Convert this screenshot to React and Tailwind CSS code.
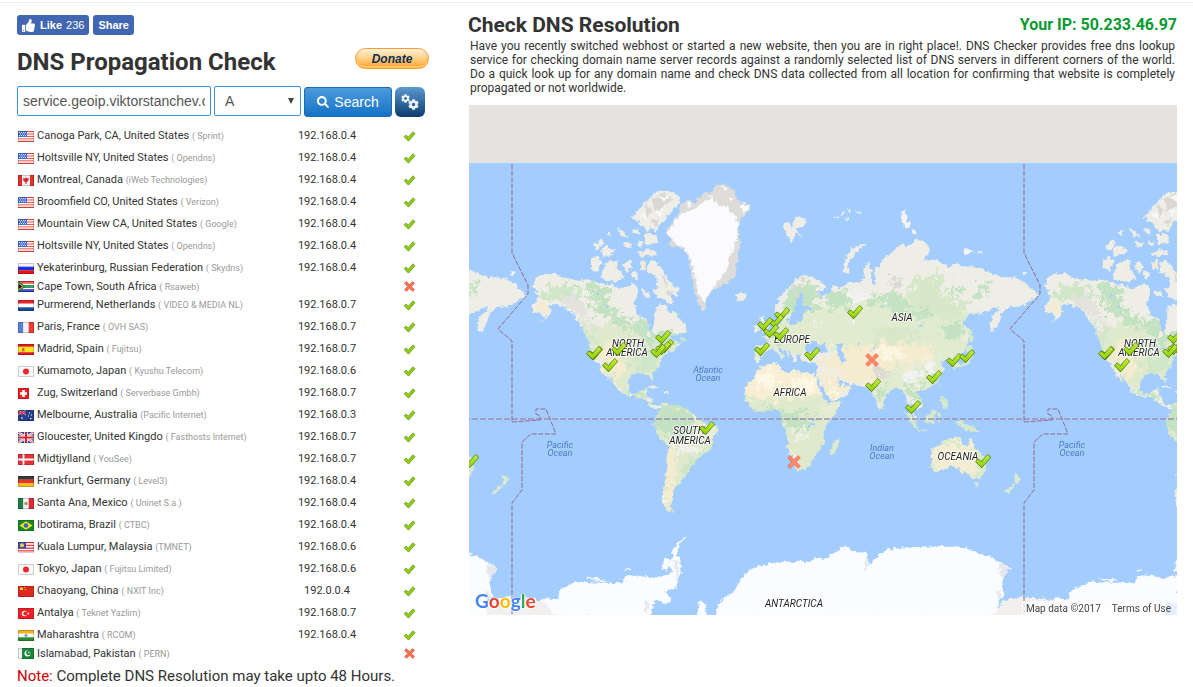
import React from "react";
import { FaSearch, FaCog, FaThumbsUp } from "react-icons/fa";

const servers = [
  ["us", "Canoga Park, CA, United States", "( Sprint)", "192.168.0.4"],
  ["us", "Holtsville NY, United States", "( Opendns)", "192.168.0.4"],
  ["ca", "Montreal, Canada", "(iWeb Technologies)", "192.168.0.4"],
  ["us", "Broomfield CO, United States", "( Verizon)", "192.168.0.4"],
  ["us", "Mountain View CA, United States", "( Google)", "192.168.0.4"],
  ["us", "Holtsville NY, United States", "( Opendns)", "192.168.0.4"],
  ["ru", "Yekaterinburg, Russian Federation", "( Skydns)", "192.168.0.4"],
  ["za", "Cape Town, South Africa", "( Rsaweb)", ""],
  ["nl", "Purmerend, Netherlands", "( VIDEO & MEDIA NL)", "192.168.0.7"],
  ["fr", "Paris, France", "( OVH SAS)", "192.168.0.7"],
  ["es", "Madrid, Spain", "( Fujitsu)", "192.168.0.7"],
  ["jp", "Kumamoto, Japan", "( Kyushu Telecom)", "192.168.0.6"],
  ["ch", "Zug, Switzerland", "( Serverbase Gmbh)", "192.168.0.7"],
  ["au", "Melbourne, Australia", "(Pacific Internet)", "192.168.0.3"],
  ["gb", "Gloucester, United Kingdo", "( Fasthosts Internet)", "192.168.0.7"],
  ["dk", "Midtjylland", "( YouSee)", "192.168.0.7"],
  ["de", "Frankfurt, Germany", "( Level3)", "192.168.0.4"],
  ["mx", "Santa Ana, Mexico", "( Uninet S.a.)", "192.168.0.4"],
  ["br", "Ibotirama, Brazil", "( CTBC)", "192.168.0.4"],
  ["my", "Kuala Lumpur, Malaysia", "(TMNET)", "192.168.0.6"],
  ["jp", "Tokyo, Japan", "( Fujitsu Limited)", "192.168.0.6"],
  ["cn", "Chaoyang, China", "( NXIT Inc)", "192.0.0.4"],
  ["tr", "Antalya", "( Teknet Yazlim)", "192.168.0.7"],
  ["in", "Maharashtra", "( RCOM)", "192.168.0.4"],
  ["pk", "Islamabad, Pakistan", "( PERN)", ""],
];

const bands = (colors) => colors.map((c, i) => <rect key={i} x="0" y={(i * 11) / colors.length} width="16" height={11 / colors.length + 0.1} fill={c} />);
const bars = (colors) => colors.map((c, i) => <rect key={i} x={(i * 16) / colors.length} y="0" width={16 / colors.length + 0.1} height="11" fill={c} />);

const flagArt = {
  us: (
    <>
      {bands(["#f2544b", "#fff", "#f2544b", "#fff", "#f2544b", "#fff", "#f2544b", "#fff", "#e8534b"])}
      <rect width="9" height="6" fill="#3f6fd8" />
      <path d="M1 1.500h7M2 3h6M1 4.500h7" stroke="#fff" strokeWidth=".8" strokeDasharray="1 1" />
    </>
  ),
  ca: (
    <>
      {bars(["#e0302f", "#f6f2f2", "#f6f2f2", "#e0302f"])}
      <path d="M8 2l1 1.500 2-.2-.7 2.200L8.500 7.500V9h-1V7.500L5.300 5.500 5 3.300l2 .2z" fill="#d8242a" />
    </>
  ),
  ru: bands(["#f4f4f4", "#1d2fe0", "#e81313"]),
  za: (
    <>
      {bands(["#e33", "#e33", "#fff", "#168a46", "#168a46", "#fff", "#2033b8", "#2033b8"])}
      <path d="M0 0l8 5.500L0 11z" fill="#168a46" />
      <path d="M0 2l5 3.500L0 9z" fill="#111" stroke="#fb3" strokeWidth=".9" />
    </>
  ),
  nl: bands(["#e8202a", "#fff", "#174a9c"]),
  fr: bars(["#5b7fd4", "#f3f3f3", "#ee3a35"]),
  es: (
    <>
      {bands(["#e6181c", "#ffe419", "#ffe419", "#e6181c"])}
      <path d="M4 4h2.500v3.500H4z" fill="#d96a3c" />
    </>
  ),
  jp: (
    <>
      <rect width="16" height="11" fill="#fafafa" />
      <circle cx="8" cy="5.500" r="3" fill="#f0252d" />
    </>
  ),
  ch: (
    <>
      <rect width="11" height="11" fill="#ee2020" />
      <path d="M5.500 2v7M2 5.500h7" stroke="#fff" strokeWidth="2.600" />
    </>
  ),
  au: (
    <>
      <rect width="16" height="11" fill="#263f8c" />
      <path d="M0 0l8 5M8 0L0 5" stroke="#e9b7c0" strokeWidth=".9" />
      <path d="M4 0v5.500M0 2.700h8" stroke="#e33d4c" strokeWidth="1.200" />
      <path d="M3 8h2M11 3h1M13 5h1M10 6h1M12 8.500h1.500" stroke="#fff" strokeWidth="1.200" />
    </>
  ),
  gb: (
    <>
      <rect width="16" height="11" fill="#3455b5" />
      <path d="M0 0l16 11M16 0L0 11" stroke="#fff" strokeWidth="2.400" />
      <path d="M0 0l16 11M16 0L0 11" stroke="#e5484f" strokeWidth=".8" />
      <path d="M8 0v11M0 5.500h16" stroke="#fff" strokeWidth="3.600" />
      <path d="M8 0v11M0 5.500h16" stroke="#e0202c" strokeWidth="2" />
    </>
  ),
  dk: (
    <>
      <rect width="16" height="11" fill="#e63238" />
      <path d="M5.500 0v11M0 5.500h16" stroke="#fff" strokeWidth="1.800" />
    </>
  ),
  de: bands(["#3a3a3a", "#e33522", "#f5bb20"]),
  mx: (
    <>
      {bars(["#1d7d46", "#f5f5f5", "#dd2b35"])}
      <circle cx="8" cy="5.500" r="1.700" fill="#a98f66" />
    </>
  ),
  br: (
    <>
      <rect width="16" height="11" fill="#148a2c" />
      <path d="M8 1.200l6.500 4.300L8 9.800 1.500 5.500z" fill="#f9e11e" />
      <circle cx="8" cy="5.500" r="2.300" fill="#3468c8" />
    </>
  ),
  my: (
    <>
      {bands(["#e8323a", "#fff", "#e8323a", "#fff", "#e8323a", "#fff", "#e8323a", "#fff"])}
      <rect width="8" height="6.500" fill="#3a4fae" />
      <circle cx="4" cy="3.200" r="2" fill="#f5d23c" />
    </>
  ),
  cn: (
    <>
      <rect width="16" height="11" fill="#dc2a22" />
      <path d="M2 1.500h3v2.500H2zM6 1h1v1H6zM7 3h1v1H7z" fill="#fbd51f" />
    </>
  ),
  tr: (
    <>
      <rect width="16" height="11" fill="#ee2025" />
      <circle cx="6.500" cy="5.500" r="2.700" fill="#fff" />
      <circle cx="7.300" cy="5.500" r="2" fill="#ee2025" />
      <path d="M9 5.500l2-1.200v2.400z" fill="#fff" />
    </>
  ),
  in: (
    <>
      {bands(["#f6b21c", "#fafafa", "#2b8a2e"])}
      <circle cx="8" cy="5.500" r="1.500" fill="#7f93cf" />
    </>
  ),
  pk: (
    <>
      <rect width="16" height="11" fill="#17883a" />
      <rect width="4" height="11" fill="#f2f2f2" />
      <circle cx="9.500" cy="5.500" r="3" fill="#fff" />
      <circle cx="10.500" cy="4.800" r="2.400" fill="#17883a" />
      <circle cx="11" cy="4.500" r=".8" fill="#fff" />
    </>
  ),
};

function Flag({ code }) {
  const width = code === "ch" ? 11 : 16;
  return (
    <svg width="16" height="11" viewBox="0 0 16 11" aria-hidden="true" className="ml-px block">
      {flagArt[code]}
      <rect x=".5" y=".5" width={width - 1} height="10" fill="none" stroke="#000" strokeOpacity=".18" />
    </svg>
  );
}

const checkPath = "M.8 7.400L3 5.200l3 2.600L12 1l2.500 2.500-8.300 9.400z";
const crossPath = "M3 .8l4 4 4-4L13.200 3l-4 4 4 4L11 13.200l-4-4-4 4L.8 11l4-4-4-4z";

function Tick() {
  return (
    <svg width="13" height="11" viewBox="0 0 15 14" role="img" aria-label="Resolved" className="mx-auto block">
      <path d={checkPath} fill="#92cc10" stroke="#6aa52a" strokeWidth="1.100" strokeLinejoin="round" />
    </svg>
  );
}

function Cross() {
  return (
    <svg width="11" height="11" viewBox="0 0 14 14" role="img" aria-label="Not resolved" className="mx-auto block">
      <path d={crossPath} fill="#fb7350" stroke="#e2573a" strokeWidth="1.100" strokeLinejoin="round" />
    </svg>
  );
}

const americas = "translate(465 160) scale(.33333)";
const eurasia = "translate(640 160) scale(.33333)";
const southern = "translate(640 360) scale(.33333)";
const siberia = "translate(820 200) scale(.33333)";
const oceania = "translate(840 370) scale(.33333)";
const polar = "translate(465 500) scale(.46425 .33333)";

const northAmerica =
  "M200 378L215 350 240 340 262 340 285 350 315 356 340 362 365 355 380 360 405 368 425 378 440 372 460 385 485 380 500 368 515 378 522 400 508 428 515 455 530 470 548 480 552 512 562 515 566 490 570 470 572 440 585 432 605 440 612 458 632 452 640 470 655 490 668 505 665 515 640 525 615 528 622 540 645 545 640 558 622 572 600 582 585 600 582 620 562 640 564 662 556 660 550 645 530 640 500 645 490 665 488 690 500 705 520 700 530 690 548 685 545 705 555 712 565 735 585 738 600 735 595 745 575 745 555 742 545 722 510 712 480 705 460 690 455 678 435 650 420 635 408 612 425 640 440 668 432 662 415 640 400 610 388 600 378 580 372 555 365 530 350 500 335 480 318 455 295 440 270 432 250 440 258 455 250 470 218 490 240 472 225 460 205 455 202 435 215 425 222 410 212 400 220 392Z";

const arcticIslands = [
  "M500 170L520 150 545 120 575 95 620 95 645 110 640 135 615 160 600 180 580 195 572 215 560 205 548 215 525 190Z",
  "M540 222L572 222 578 245 560 254 540 252Z",
  "M500 205L518 205 522 225 508 222ZM518 240L532 246 528 262 516 255Z",
  "M518 280L545 268 572 272 574 284 530 290Z",
  "M378 300L395 288 412 305 395 335 378 325Z",
  "M408 350L422 312 440 300 458 305 455 325 478 350 455 365 425 362Z",
  "M475 308L493 300 500 320 488 340 475 330Z",
  "M385 255L410 235 417 252 395 272Z",
  "M408 268L425 255 440 268 460 272 435 285 410 287Z",
  "M425 217L438 212 436 228ZM455 203L468 208 478 216 490 235 470 228ZM475 243L500 250 498 265 480 262Z",
  "M525 305L540 298 544 325 530 332Z",
  "M550 308L566 300 590 325 605 350 625 375 645 385 635 410 618 400 624 435 600 420 575 408 560 390 578 380 580 358 560 340 548 340Z",
  "M528 388L550 395 557 410 535 410Z",
  "M502 330L520 340 512 360 500 350Z",
];

const eurasiaCoast =
  "M405 440L415 420 430 400 445 380 465 358 490 345 515 350 545 365 560 380 550 395 528 392 545 410 560 405 575 395 578 375 590 378 600 385 625 370 660 365 675 355 672 320 685 308 695 330 693 360 702 380 706 340 700 320 720 322 725 300 755 275 790 250 800 262 830 235 860 250 870 275 850 298 890 300 930 322 945 310 985 320 1020 325 1060 345 1100 352 1125 352 1160 372 1185 395 1196 410 1180 415 1165 425 1140 440 1110 440 1085 460 1080 480 1062 515 1050 520 1050 490 1060 465 1080 442 1060 445 1030 460 1000 460 980 470 965 490 990 515 985 540 975 570 955 585 955 605 962 620 950 620 942 608 930 600 910 600 900 612 912 625 905 640 895 660 880 675 855 690 835 690 830 700 845 720 848 735 835 750 825 738 815 730 812 745 825 765 835 782 825 778 808 745 800 720 795 700 785 690 770 682 755 690 735 705 730 735 722 750 712 735 700 705 692 690 680 685 650 675 625 670 610 665 590 648 600 668 615 680 635 675 620 705 590 720 572 725 560 700 545 675 530 650 528 640 535 620 525 605 500 608 485 600 480 583 468 585 472 605 460 600 455 582 440 565 450 590 430 570 412 560 425 580 435 590 425 602 415 580 400 565 385 572 370 585 355 608 343 600 348 575 346 560 380 556 385 540 368 528 395 520 410 500 425 490 422 475 405 460Z";

const eurasiaIslands = [
  "M358 475L370 465 375 485 387 505 385 515 362 520 370 500Z",
  "M342 498L355 493 356 512 342 516Z",
  "M285 405L300 395 322 400 318 415 300 425 290 418Z",
  "M430 190L445 185 455 200 465 175 480 168 497 180 490 200 470 205 485 235 470 217 455 250 440 225Z",
  "M608 335L612 305 630 270 670 250 678 255 645 280 630 300 622 320 630 342Z",
  "M580 170L600 165 595 175ZM605 155L615 160 606 166ZM620 145L635 150 625 158ZM645 155L662 152 660 162ZM615 172L630 175 618 180Z",
];

const siberianIslands = [
  "M400 498L425 492 440 480 452 450 458 470 450 492 425 497 405 505ZM435 440L455 438 462 448 440 455ZM447 385L455 385 458 425 448 430Z",
  "M398 500L405 500 406 512 398 512ZM358 548L363 556 358 562ZM360 580L368 592 380 600 382 625 370 628 362 600Z",
  "M315 655L335 630 350 632 342 672 318 670ZM250 632L268 640 290 670 295 688 278 676ZM290 685L325 692 322 697 290 690ZM352 640L362 640 358 672 352 670Z",
  "M405 665L425 662 435 672 460 680 482 697 460 695 435 690ZM183 615L191 622 186 630Z",
];
const polarSiberianIslands = [
  "M240 40L255 30 260 55 272 75 265 88 248 75ZM275 88L288 92 292 100 278 103ZM430 150L445 145 462 155 435 166ZM470 155L488 160 475 164Z",
  "M608 214L622 214 618 222 608 221Z",
];

const greenland =
  "M75 220L90 195 105 180 120 150 122 130 150 118 165 130 180 110 195 92 215 100 230 75 250 70 285 88 285 110 300 130 325 132 332 145 315 165 300 180 295 215 300 250 295 290 285 350 255 372 220 388 205 412 195 452 180 440 165 400 160 360 150 320 145 290 130 265 100 260 85 255 95 235Z";
const greenlandIce =
  "M78 219L105 188 122 160 160 150 190 125 215 118 245 140 265 145 288 170 295 200 290 240 272 280 264 320 245 350 217 382 195 430 175 405 166 355 150 292 130 261 105 256 98 235Z";

const southAmerica =
  "M62 130L75 128 100 135 125 135 145 150 165 165 175 180 200 190 230 200 235 212 220 235 215 260 205 275 180 285 165 310 150 325 140 345 120 358 125 368 108 378 100 400 98 420 92 440 102 458 85 455 70 435 65 410 75 375 78 330 82 290 85 255 60 235 45 205 40 190 50 165 60 148Z";
const africa =
  "M345 50L360 20 380 14 415 8 422 28 445 40 458 30 485 38 515 40 528 50 535 80 550 110 565 130 602 126 590 155 570 180 555 200 550 220 555 240 545 260 530 275 520 300 500 325 470 333 462 315 455 290 440 260 445 235 435 205 422 180 425 160 410 150 385 150 350 155 330 140 312 115 318 80Z";
const australia =
  "M270 240L300 225 315 210 330 205 350 200 367 205 362 218 380 230 387 222 390 198 400 215 407 238 425 255 440 275 435 300 420 325 400 325 385 318 380 305 365 310 355 292 330 290 300 302 280 303 272 290 277 265Z";

const antarctica = [
  "M540 350L545 310 580 270 610 210 640 195 680 185 740 185 760 172 770 180 800 152 820 138 840 155 865 158 870 195 885 175 905 150 950 142 1010 140 1070 140 1100 155 1130 170 1150 185 1175 205 1155 245 1162 290 1150 300 1148 350Z",
  "M165 295L200 298 205 270 240 245 290 248 340 250 345 225 380 228 405 235 430 225 450 215 438 190 450 165 460 170 467 215 455 260 430 275 445 290 440 308 425 312 410 300 400 350 160 350Z",
  "M450 170L445 155 458 128 475 110 478 114 460 135 456 168ZM500 350L500 315 510 304 518 315 518 350Z",
  "M262 233L285 235 310 245 270 241ZM340 210L358 208 355 214ZM425 200L432 172 440 180 436 215 425 212Z",
];

const paint = (transform, paths, fill) => (
  <g transform={transform} fill={fill}>
    {paths.map((d, i) => (
      <path key={i} d={d} />
    ))}
  </g>
);

function Terrain({ frame, clip, children }) {
  return (
    <g transform={frame} clipPath={`url(#${clip})`}>
      <g filter="url(#mottle)">{children}</g>
    </g>
  );
}

function Land() {
  return (
    <g id="land">
      <clipPath id="clip-na"><path d={northAmerica} /></clipPath>
      <clipPath id="clip-ea"><path d={eurasiaCoast} /></clipPath>
      <clipPath id="clip-sa"><path d={southAmerica} /></clipPath>
      <clipPath id="clip-af"><path d={africa} /></clipPath>
      <clipPath id="clip-au"><path d={australia} /></clipPath>

      {paint(americas, [northAmerica, ...arcticIslands], "#eeede6")}
      <Terrain frame={americas} clip="clip-na">
        <path fill="#deeacb" d="M350 500L480 490 600 530 640 560 560 680 470 720 430 650 370 560Z" />
        <path fill="#c3e2c1" d="M362 360L400 372 440 400 430 430 470 465 530 480 560 520 620 515 650 540 590 560 540 540 480 505 420 470 380 440 365 400Z" />
        <path fill="#cfe7c8" d="M230 385L290 375 350 370 350 400 300 430 250 420ZM345 470L375 510 395 560 375 560 350 500ZM500 600L580 570 570 640 510 645Z" />
        <path fill="#f5ecd0" d="M395 560L460 540 480 600 470 660 440 640 400 600ZM205 430L245 435 255 465 210 460Z" />
        <path fill="#e4e2dc" d="M290 405L340 410 360 450 390 500 400 540 375 490 340 460 300 440Z" />
        <path fill="#c5e3c0" d="M480 690L550 705 570 740 540 720 500 712Z" />
        <path fill="#eeede6" d="M375 400L395 415 385 430ZM440 440L460 450 445 465ZM480 480L505 490 490 500ZM400 480L420 490 410 505Z" />
        <path fill="#a3ccff" d="M385 388L405 395 392 402ZM422 430L436 433 428 440ZM530 558L562 560 570 572 545 573Z" />
      </Terrain>
      {paint(americas, ["M645 528L660 530 668 542 648 541Z"], "#d4e8cd")}
      <g transform={americas} fill="#d9d8d4">
        <path d="M560 115L600 100 625 120 590 140 570 160ZM540 130L560 150 545 175ZM560 180L585 175 570 200ZM590 340L610 365 600 380ZM600 390L625 395 612 408Z" />
        <path fill="#f8f8f8" d="M580 110L612 105 600 128ZM525 165L540 155 548 185ZM575 150L600 150 580 170ZM600 350L615 375 622 385 605 370Z" />
        <path fill="#f3ead0" d="M527 308L540 302 541 322 532 328ZM445 310L455 312 450 340ZM520 283L540 275 538 287Z" />
      </g>

      {paint(eurasia, [greenland], "#dddcd8")}
      {paint(eurasia, [greenlandIce, "M300 133L325 135 326 145 310 160Z", "M140 128L152 126 155 140 142 142ZM205 103L220 110 215 120ZM240 80L262 85 255 95ZM262 110L280 112 272 128Z"], "#fbfbff")}
      {paint(eurasia, [eurasiaCoast, ...eurasiaIslands], "#eeede6")}
      {paint(siberia, polarSiberianIslands, "#f4f3f0")}
      <Terrain frame={eurasia} clip="clip-ea">
        <path fill="#e1ebd0" d="M340 460L450 470 560 440 700 430 850 400 960 420 1000 480 980 570 960 620 880 690 800 700 720 750 690 680 560 560 340 600Z" />
        <path fill="#d7e8c9" d="M820 350L900 345 920 420 990 430 960 480 860 470 800 420ZM700 510L830 500 850 540 720 545Z" />
        <path fill="#c3e2c1" d="M440 420L470 370 520 362 550 385 520 420 540 430 520 460 480 450 430 470ZM560 400L620 385 640 430 600 450 560 440ZM680 400L770 400 800 440 880 450 850 480 790 470 740 440 690 430ZM900 500L970 480 960 540 920 540ZM1010 370L1050 365 1040 400 1015 410ZM930 380L960 380 955 410 935 405Z" />
        <path fill="#f5ecd0" d="M590 560L680 560 740 540 880 560 870 610 780 620 730 630 700 680 590 650 530 640 525 660 575 730 640 680 600 640 540 610 560 590Z" />
        <path fill="#fcf5e2" d="M700 570L760 560 790 590 740 600ZM560 650L600 690 580 715Z" />
        <path fill="#c6e3c0" d="M700 690L760 670 735 700 725 745ZM790 680L850 680 845 735 815 725ZM850 640L905 640 880 675ZM348 580L385 570 362 600ZM410 500L440 540 430 570 400 530Z" />
        <path fill="#dbdad5" d="M755 355L790 350 780 400 760 390ZM450 380L480 355 500 352 460 400ZM700 620L760 640 740 650 700 640Z" />
        <path fill="#f2f2f2" d="M640 390L680 400 670 440 640 420ZM780 640L830 620 840 660 800 670ZM720 420L750 425 740 440ZM620 480L650 485 640 500ZM850 610L890 600 880 640 860 640ZM960 360L990 370 980 390ZM500 480L530 490 520 505Z" />
      </Terrain>
      <g transform={eurasia} fill="#a3ccff">
        <path d="M435 482L455 470 465 440 478 400 492 408 485 438 512 438 512 447 490 455 487 482 455 495Z" />
        <path d="M495 578L500 552 520 544 532 555 555 550 565 576 530 578ZM588 552L612 546 604 570 617 600 605 612 596 590Z" />
        <path d="M832 510L850 485 848 500ZM695 565L705 562 700 572ZM650 550L660 548 655 558ZM590 665L610 668 600 680Z" />
      </g>
      {paint(siberia, siberianIslands, "#d6e9cd")}

      {paint(southern, ["M22 82L40 76 60 86 50 88ZM68 92L88 94 90 98 70 99Z"], "#eeede6")}
      {paint(southern, [southAmerica, africa, "M572 265L588 240 594 230 599 245 590 270 582 288 570 280Z"], "#dfeacc")}
      <Terrain frame={southern} clip="clip-sa">
        <path fill="#c3e2c1" d="M40 130L130 135 160 170 140 240 90 230 50 210Z" />
        <path fill="#ecedda" d="M160 180L235 200 215 240 170 230Z" />
        <path fill="#f5ecd0" d="M82 250L105 270 105 350 100 400 90 450 65 430 78 380Z" />
        <path fill="#cde6c5" d="M165 290L205 250 180 310 130 350 140 310Z" />
        <path fill="#f2f2ee" d="M90 255L135 250 180 255 170 275 120 270ZM65 410L80 410 85 435 72 435Z" />
      </Terrain>
      <Terrain frame={southern} clip="clip-af">
        <path fill="#f7eed4" d="M290 -20L560 -20 580 120 520 110 420 115 290 110Z" />
        <path fill="#fdf7e4" d="M340 60L400 30 420 70 370 90ZM450 50L530 55 530 90 470 95Z" />
        <path fill="#e8ecd0" d="M560 120L610 120 590 170 540 160Z" />
        <path fill="#c3e2c1" d="M350 140L400 135 420 155 500 160 520 185 495 205 430 205 420 160Z" />
        <path fill="#eff0e8" d="M450 215L490 200 500 235 470 250Z" />
        <path fill="#f5ecd0" d="M438 250L460 270 475 320 460 320Z" />
        <path fill="#a3ccff" d="M512 180L528 178 520 192ZM505 205L510 215 506 218Z" />
      </Terrain>
      {paint(oceania, [australia], "#f3edd3")}
      <Terrain frame={oceania} clip="clip-au">
        <path fill="#d8e9c8" d="M300 220L370 195 365 225 320 225ZM385 200L410 240 445 280 425 330 390 320 420 300 405 260ZM265 280L290 285 285 310Z" />
      </Terrain>
      {paint(oceania, ["M402 340L416 341 411 354ZM525 308L534 320 544 324 532 345 524 340ZM527 338L518 356 502 372 494 366Z"], "#dcebd0")}

      {paint(polar, ["M1145 350L1160 300 1185 292 1210 305 1270 300 1300 350Z", "M30 350L55 310 90 292 150 296 175 310 180 350Z"], "#f1f0ee")}
      {paint(polar, antarctica, "#fbfcff")}
      <g transform={polar} fill="#e6e7ea">
        <path d="M1150 190L1174 206 1158 240 1152 225ZM448 180L458 185 462 225 452 250 455 215ZM388 300L398 310 394 340 386 330ZM1148 270L1158 290 1148 300ZM858 190L868 165 866 215Z" />
      </g>
    </g>
  );
}

const ticks = [
  [595, 353], [594, 353], [619, 349], [610, 365], [663, 337], [666, 346], [663, 348], [658, 351],
  [782, 314], [776, 321], [765, 324], [771, 331], [781, 334], [762, 349], [812, 354], [855, 312],
  [873, 385], [954, 360], [967, 356], [934, 377], [913, 407], [707, 428], [983, 461],
];
const crosses = [[872, 360], [794, 462]];
const labels = [
  [628, 347, "NORTH"], [627, 356, "AMERICA"], [902, 321, "ASIA"], [792, 343, "EUROPE"], [790, 396, "AFRICA"],
  [689, 434, "SOUTH"], [690, 444, "AMERICA"], [958, 460, "OCEANIA"], [794, 607, "ANTARCTICA"],
];
const oceans = [
  [708, 373, "Atlantic"], [708, 381, "Ocean"], [560, 448, "Pacific"], [560, 456, "Ocean"], [882, 451, "Indian"], [882, 459, "Ocean"],
];
const dateline =
  "M512 164V253L528 285V294L498 329 512 341V422L540 420V416L536 414V409H546L556 434H531L522 442V490L512 503V615";
const copies = [-512, 0, 512];
const onMap = (x) => x > 469 && x < 1177;

function WorldMap() {
  return (
    <svg viewBox="469 105 708 510" preserveAspectRatio="xMidYMid slice" role="img" aria-label="World map of DNS servers" className="block h-[510px] w-full font-['Roboto',sans-serif]">
      <defs>
        <filter id="coast" filterUnits="userSpaceOnUse" x="460" y="105" width="730" height="520">
          <feTurbulence type="fractalNoise" baseFrequency=".22" numOctaves="3" seed="4" />
          <feDisplacementMap in="SourceGraphic" scale="6" xChannelSelector="R" yChannelSelector="G" />
        </filter>
        <filter id="mottle">
          <feTurbulence type="fractalNoise" baseFrequency=".05" numOctaves="4" seed="9" />
          <feDisplacementMap in="SourceGraphic" scale="75" xChannelSelector="R" yChannelSelector="G" />
        </filter>
        <linearGradient id="tick-fill" x1="0" y1="0" x2="0" y2="1">
          <stop offset="0" stopColor="#c4ee3a" />
          <stop offset="1" stopColor="#8fcf00" />
        </linearGradient>
        <path id="tick" d={checkPath} transform="translate(-8 -7.300) scale(1.060)" fill="url(#tick-fill)" stroke="#436f0b" strokeLinejoin="round" />
        <path id="cross" d={crossPath} transform="translate(-7 -7)" fill="#ff8a70" stroke="#d23a22" strokeLinejoin="round" />
      </defs>
      <rect x="-2000" y="105" width="5000" height="58" fill="#e5e3df" />
      <rect x="-2000" y="163" width="5000" height="452" fill="#a3ccff" />
      <g filter="url(#coast)">
        <Land />
        <use href="#land" x="-512" />
        <use href="#land" x="512" />
      </g>
      <path d="M-512 419H2048" stroke="#a08fae" strokeWidth="1.500" strokeDasharray="6 2" />
      {copies.slice(1).map((dx) => (
        <path key={dx} transform={`translate(${dx} 0)`} d={dateline} fill="none" stroke="#94688c" strokeDasharray="5 1.500" />
      ))}
      {copies.map((dx) => (
        <g key={dx} transform={`translate(${dx} 0)`} textAnchor="middle" fontStyle="italic" fontSize="10" strokeLinejoin="round" paintOrder="stroke">
          {labels.filter(([x]) => onMap(x + dx)).map(([x, y, t]) => (
            <text key={t + y} x={x} y={y} fill="#1d1d1d" stroke="#fff" strokeOpacity=".75" strokeWidth="2">{t}</text>
          ))}
          {oceans.filter(([x]) => onMap(x + dx)).map(([x, y, t]) => (
            <text key={t + y} x={x} y={y} fontSize="9" fill="#4c7cc0">{t}</text>
          ))}
          {ticks.map(([x, y]) => (
            <use key={x + "-" + y} href="#tick" x={x} y={y} />
          ))}
          {crosses.map(([x, y]) => (
            <use key={x + "-" + y} href="#cross" x={x} y={y} />
          ))}
        </g>
      ))}
    </svg>
  );
}

function GoogleLogo() {
  return (
    <a href="#google" className="flex font-['Lato',sans-serif] text-[19px] leading-7 font-bold [text-shadow:0_0_1px_#fff,1px_0_1px_#fff,-1px_0_1px_#fff,0_1px_1px_#fff]">
      <span className="text-[#4285f4]">G</span>
      <span className="text-[#ea4335]">o</span>
      <span className="text-[#fbbc05]">o</span>
      <span className="text-[#4285f4]">g</span>
      <span className="text-[#34a853]">l</span>
      <span className="text-[#ea4335]">e</span>
    </a>
  );
}

export default function App() {
  return (
    <div className="bg-white font-['Roboto',sans-serif] text-[#333]">
      <div className="mt-[2px] h-px bg-[#eee]" />
      <main className="flex items-start pr-4">
        <section className="w-[468px] shrink-0 pl-[17px]">
          <div className="flex gap-1 pt-3 font-['Liberation_Sans',sans-serif] text-[11px] leading-5 text-white">
            <button type="button" className="flex h-5 items-center rounded-[3px] bg-[#4267b2] pr-[5px] pl-[5px]">
              <FaThumbsUp className="mr-[5px] size-[13px]" />
              <span className="font-bold">Like</span>
              <span className="ml-1">236</span>
            </button>
            <button type="button" className="h-5 rounded-[3px] bg-[#4267b2] px-[5px] font-bold">Share</button>
          </div>
          <div className="mt-[11px] flex h-8 w-[412px] items-center justify-between">
            <h1 className="text-2xl font-bold">DNS Propagation Check</h1>
            <button type="button" className="mb-[7px] h-[21px] w-[74px] rounded-full border border-[#ff9933] bg-linear-to-b from-[#fff2d8] via-[#ffd48a] via-45% to-[#ffa01e] font-['Liberation_Sans',sans-serif] text-xs leading-[18px] font-bold text-[#0c2f57] italic shadow-[inset_0_-2px_0_#ffc65c]">
              Donate
            </button>
          </div>
          <form className="mt-2 flex items-start gap-[3px] font-['Liberation_Sans',sans-serif]" onSubmit={(e) => e.preventDefault()}>
            <input aria-label="Domain name" defaultValue="service.geoip.viktorstanchev.com" className="h-[30px] w-[194px] rounded-[2px] border border-[#3a95d8] px-[5px] text-sm text-[#555]" />
            <div className="relative">
              <select aria-label="Record type" defaultValue="A" className="h-[30px] w-[87px] appearance-none rounded-[2px] border border-[#3a95d8] bg-white pl-[10px] text-sm text-[#555]">
                <option>A</option>
                <option>AAAA</option>
                <option>CNAME</option>
                <option>MX</option>
                <option>NS</option>
              </select>
              <svg width="6" height="6" viewBox="0 0 6 6" aria-hidden="true" className="pointer-events-none absolute top-3 right-[7px]">
                <path d="M0 0h6L3 6z" fill="#444" />
              </svg>
            </div>
            <button type="submit" className="mt-px flex h-[30px] w-[88px] items-center justify-center gap-[5px] rounded-[3px] border border-[#1a6cb4] bg-linear-to-b from-[#4a9bdc] to-[#1273c6] text-sm text-white">
              <FaSearch className="size-3" />
              Search
            </button>
            <button type="button" aria-label="Settings" className="mt-px flex size-[30px] items-center justify-center rounded-md bg-linear-to-b from-[#5b9bd0] to-[#0b3c6e] text-[#eef3f8]">
              <FaCog className="mb-[7px] size-[9px]" />
              <FaCog className="mt-[5px] -ml-[2px] size-[11px]" />
            </button>
          </form>
          <table className="mt-2 w-[425px] table-fixed text-[11px]">
            <colgroup>
              <col className="w-5" />
              <col />
              <col className="w-[98px]" />
              <col className="w-[66px]" />
            </colgroup>
            <tbody>
              {servers.map(([flag, place, provider, ip], i) => (
                <tr key={i} className={ip ? "h-[22px]" : "h-[15px]"}>
                  <td className="p-0"><Flag code={flag} /></td>
                  <td className="p-0 leading-[14px] whitespace-nowrap">
                    {place} <span className="text-[9px] leading-none text-[#999]">{provider}</span>
                  </td>
                  <td className="p-0 text-center leading-[14px]">{ip}</td>
                  <td className="p-0">{ip ? <Tick /> : <Cross />}</td>
                </tr>
              ))}
            </tbody>
          </table>
          <p className="pt-1 text-[15px] leading-[22px]">
            <span className="text-[#c00]">Note:</span> Complete DNS Resolution may take upto 48 Hours.
          </p>
        </section>

        <section className="min-w-0 grow">
          <div className="flex items-center justify-between pt-2">
            <h2 className="text-[21px] leading-7 font-bold">Check DNS Resolution</h2>
            <p className="text-base leading-[26px] font-bold text-[#0a9a32]">Your IP: 50.233.46.97</p>
          </div>
          <p className="mr-[2px] ml-[2px] text-justify text-xs leading-[14px]">
            Have you recently switched webhost or started a new website, then you are in right place!. DNS Checker provides free dns lookup service for checking domain name server records against a randomly selected list of DNS servers in different corners of the world. Do a quick look up for any domain name and check DNS data collected from all location for confirming that website is completely propagated or not worldwide.
          </p>
          <div className="relative mt-[10px] ml-px overflow-hidden">
            <WorldMap />
            <div className="absolute bottom-0 left-[6px]"><GoogleLogo /></div>
            <div className="absolute right-0 bottom-0 flex h-[14px] items-center bg-white/70 text-[10px] text-[#444]">
              <span className="px-1">Map data ©2017</span>
              <a href="#terms" className="border-l border-white px-[6px]">Terms of Use</a>
            </div>
          </div>
        </section>
      </main>
    </div>
  );
}
